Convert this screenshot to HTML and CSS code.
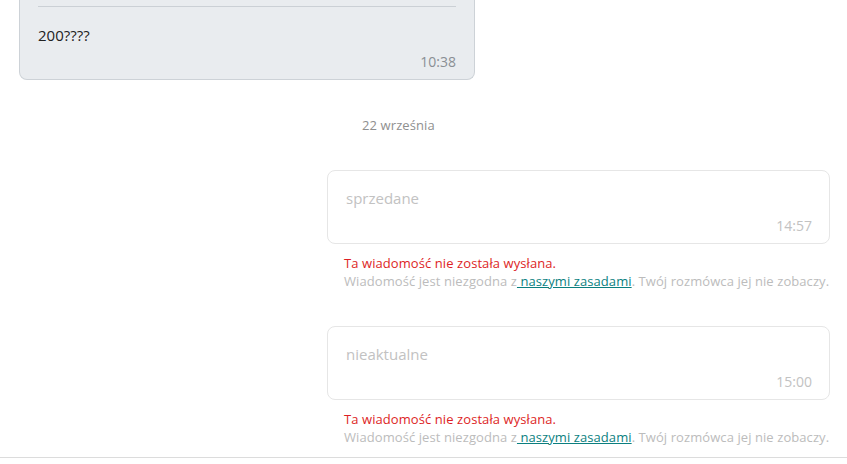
FILE: index.html
```html
<!DOCTYPE html>
<html lang="pl">
<head>
    <meta charset="UTF-8">
    <meta name="viewport" content="width=device-width, initial-scale=1.0">
    <title>Wiadomości</title>
    <link rel="stylesheet" href="styles.css">
</head>
<body>

    <div class="conversation">

        <!-- Incoming message (scrolled partly out of view) -->
        <div class="message incoming">
            <div class="quote-end"></div>
            <p class="message-text">200????</p>
            <div class="message-time">10:38</div>
        </div>

        <div class="day-separator">22 września</div>

        <!-- Outgoing, blocked -->
        <div class="outgoing-wrap">
            <div class="message outgoing">
                <p class="message-text">sprzedane</p>
                <div class="message-time">14:57</div>
            </div>
            <div class="blocked-info">
                <p class="error">Ta wiadomość nie została wysłana.</p>
                <p class="hint">Wiadomość jest niezgodna z<a href="#"> naszymi zasadami</a>. Twój rozmówca jej nie zobaczy.</p>
            </div>
        </div>

        <div class="outgoing-wrap">
            <div class="message outgoing">
                <p class="message-text">nieaktualne</p>
                <div class="message-time">15:00</div>
            </div>
            <div class="blocked-info">
                <p class="error">Ta wiadomość nie została wysłana.</p>
                <p class="hint">Wiadomość jest niezgodna z<a href="#"> naszymi zasadami</a>. Twój rozmówca jej nie zobaczy.</p>
            </div>
        </div>

    </div>

</body>
</html>
```

FILE: styles.css
```css
body {
    font-family: "Open Sans", "Noto Sans", Arial, sans-serif;
    margin: 0;
    padding: 0;
    background-color: #fff;
    color: #333;
}
p {
    margin: 0;
}
.conversation {
    padding: 0 17px 11px 19px;
    border-bottom: 1px solid #dcdcdc;
}
.message {
    border-radius: 8px;
    box-sizing: border-box;
}
.incoming {
    width: 456px;
    padding: 0 18px 8px 18px;
    background-color: #e9ecef;
    border: 1px solid #cdd2d7;
    border-top: none;
    border-radius: 0 0 8px 8px;
}
.quote-end {
    height: 6px;
    border-bottom: 1px solid #cbd0d5;
}
.incoming .message-text {
    font-size: 15px;
    line-height: 20px;
    margin-top: 18px;
    color: #222;
}
.message-time {
    font-size: 14px;
    line-height: 18px;
    margin-top: 8px;
    text-align: right;
    color: #8a8f94;
}
.day-separator {
    font-size: 13px;
    line-height: 18px;
    color: #8f8f8f;
    padding-left: 343px;
    letter-spacing: 0.1px;
    margin: 36px 0 36px;
}
.outgoing-wrap {
    margin-left: 308px;
    margin-bottom: 36px;
}
.outgoing-wrap:last-child {
    margin-bottom: 0;
}
.outgoing {
    padding: 16px 17px 8px 18px;
    border: 1px solid #e6e6e6;
    background-color: #fff;
}
.outgoing .message-text {
    font-size: 15px;
    line-height: 22px;
    color: #c2c2c2;
}
.outgoing .message-time {
    color: #c2c2c2;
}
.blocked-info {
    margin-top: 10px;
    padding-left: 17px;
    font-size: 13px;
    line-height: 18px;
    letter-spacing: 0.08px;
    white-space: nowrap;
}
.error {
    color: #dd1f26;
}
.hint {
    color: #bcbcbc;
}
.hint a {
    color: #0b7f7f;
    text-decoration: underline;
}
```
